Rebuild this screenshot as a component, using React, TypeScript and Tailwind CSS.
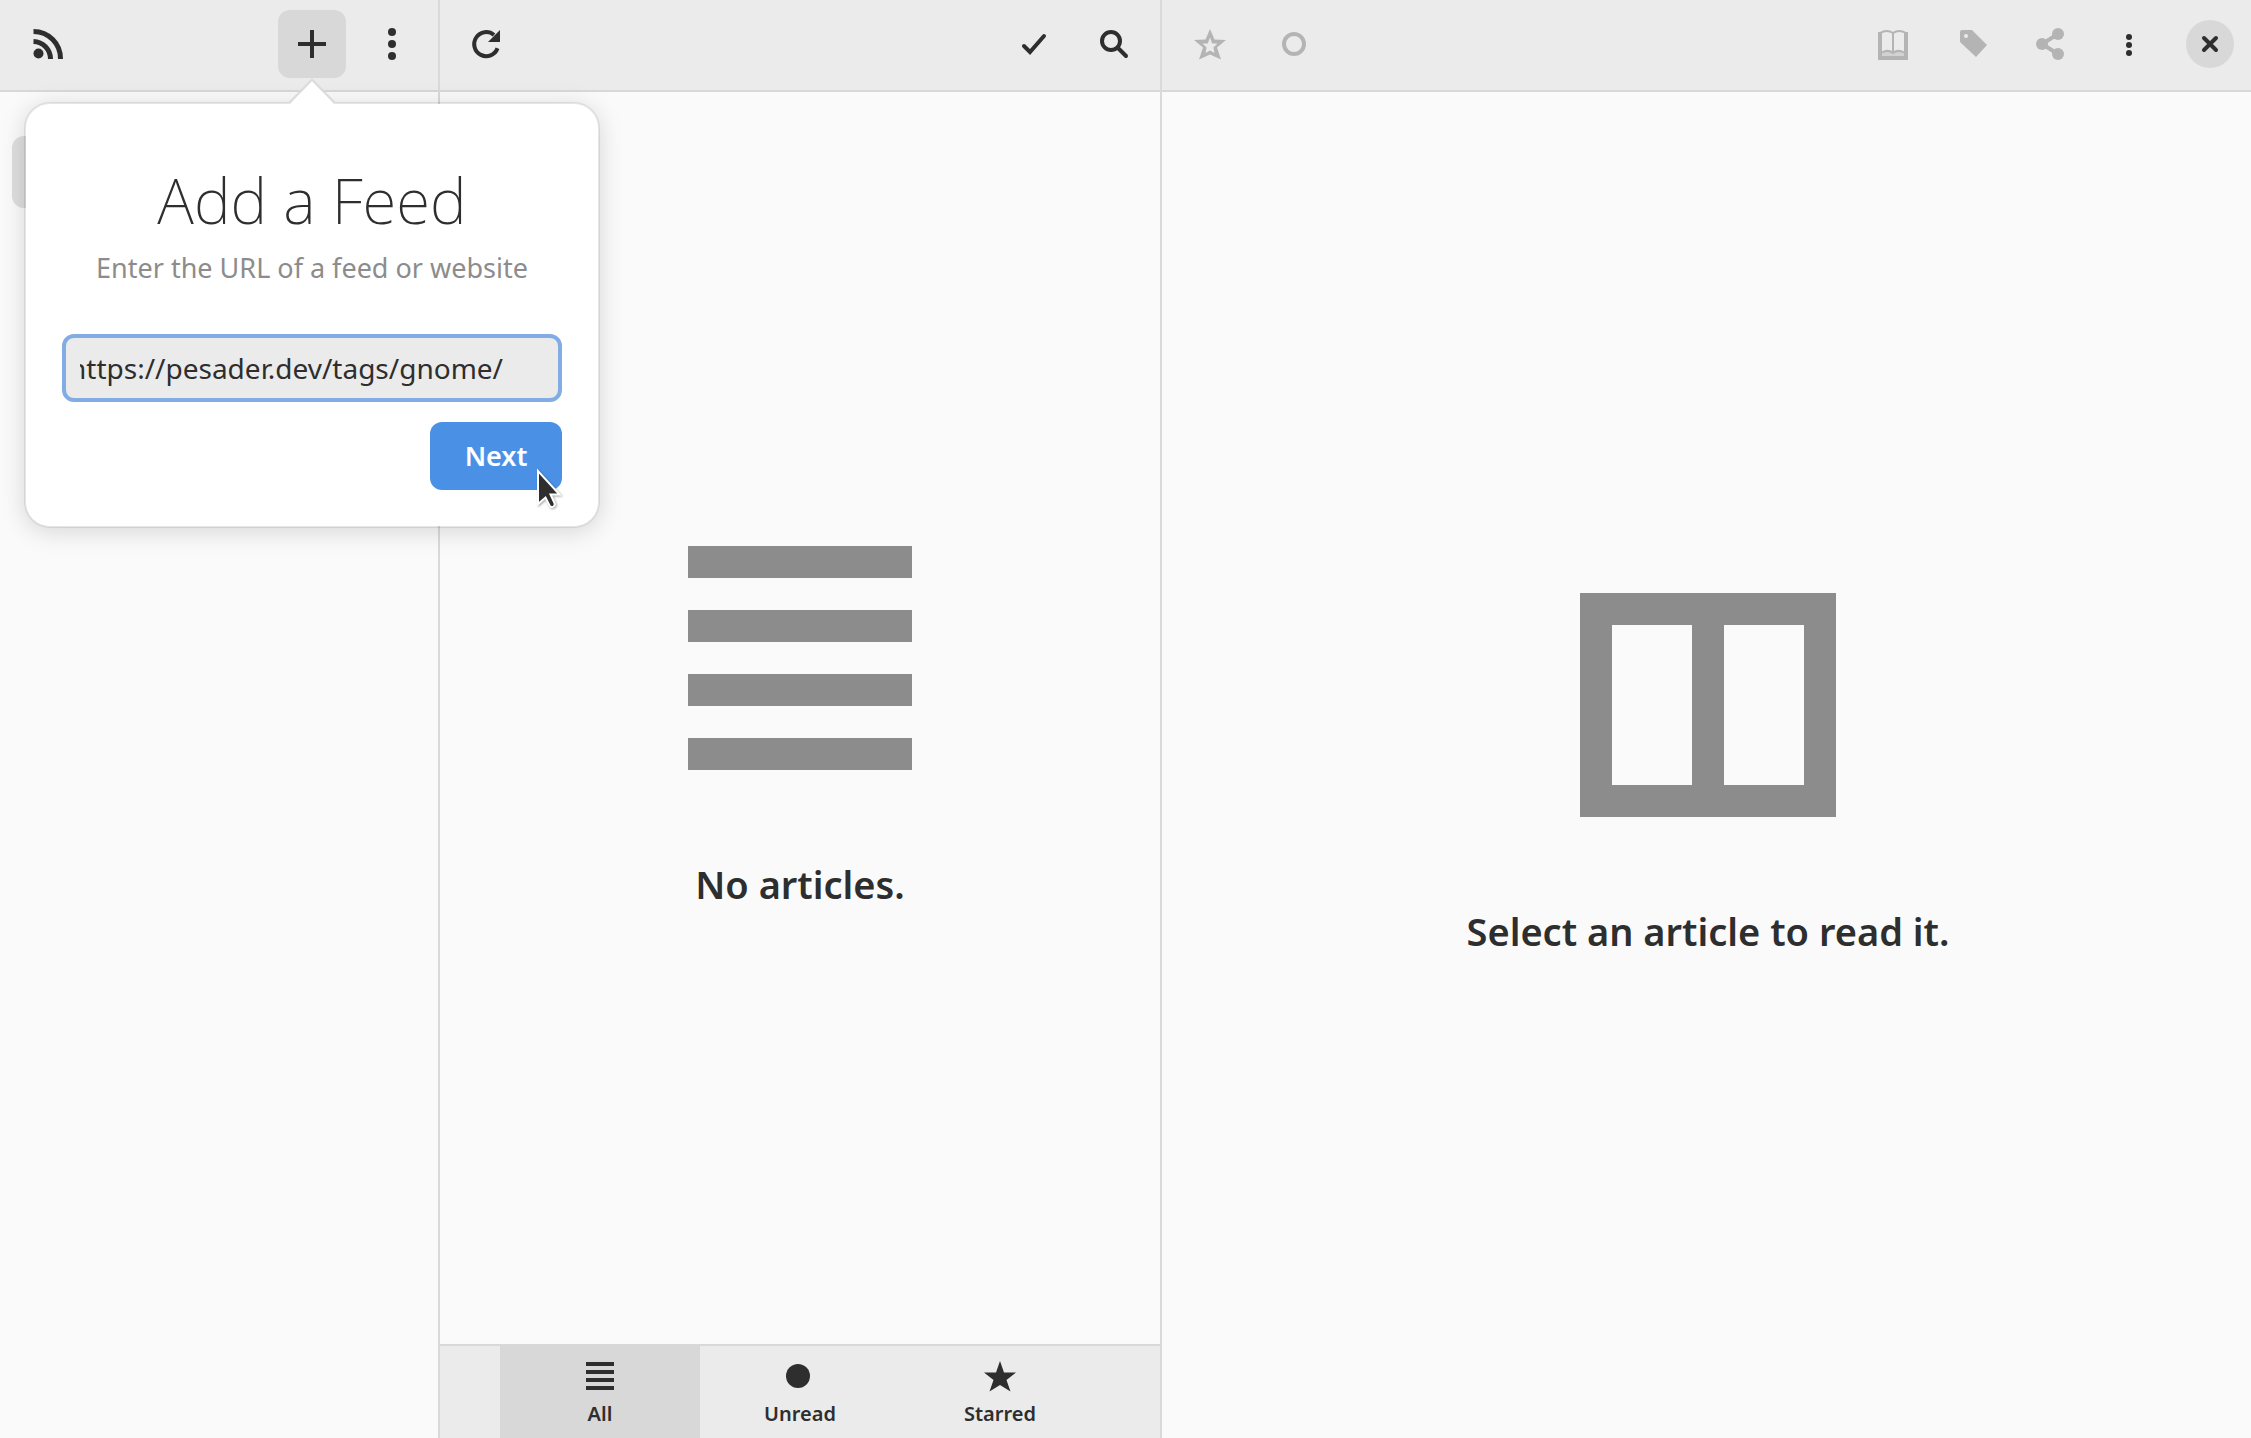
import { useState, type ReactNode } from "react";

function Icon({ children, className = "text-[#2e2e2e]" }: { children: ReactNode; className?: string }) {
  return (
    <svg viewBox="0 0 40 40" className={`size-10 shrink-0 ${className}`} fill="currentColor" aria-hidden="true">
      {children}
    </svg>
  );
}

function HeaderButton({
  label,
  active = false,
  disabled = false,
  children,
}: {
  label: string;
  active?: boolean;
  disabled?: boolean;
  children: ReactNode;
}) {
  return (
    <button
      type="button"
      aria-label={label}
      disabled={disabled}
      className={`flex size-[68px] shrink-0 items-center justify-center rounded-xl ${active ? "bg-[#d8d8d8]" : ""}`}
    >
      <Icon className={disabled ? "text-[#b4b4b4]" : "text-[#2e2e2e]"}>{children}</Icon>
    </button>
  );
}

function EmptyState({ text, children }: { text: string; children: ReactNode }) {
  return (
    <div className="flex flex-1 flex-col items-center justify-center pt-0.5">
      <svg viewBox="0 0 256 256" className="size-64" fill="#8c8c8c" aria-hidden="true">
        {children}
      </svg>
      <h2 className="mt-[74px] text-[38px] leading-[48px] font-semibold">{text}</h2>
    </div>
  );
}

function ViewTab({
  label,
  selected = false,
  children,
}: {
  label: string;
  selected?: boolean;
  children: ReactNode;
}) {
  return (
    <button
      type="button"
      aria-pressed={selected}
      className={`flex w-[200px] flex-col items-center gap-1 pt-2.5 ${selected ? "bg-[#d8d8d8]" : ""}`}
    >
      <Icon>{children}</Icon>
      <span className="text-[20px] leading-7 font-semibold">{label}</span>
    </button>
  );
}

function AddFeedPopover() {
  const [url, setUrl] = useState("https://pesader.dev/tags/gnome/");
  return (
    <div
      role="dialog"
      aria-labelledby="add-feed-title"
      className="absolute top-[102px] left-6 z-10 w-[576px] rounded-[26px] border-2 border-black/8 bg-white bg-clip-padding p-9 shadow-[0_4px_24px_rgba(0,0,0,0.14)]"
    >
      <svg viewBox="0 0 48 26" className="absolute -top-[26px] left-[262px] h-[26px] w-12" aria-hidden="true">
        <path d="M2 26 24 3 46 26Z" fill="#fff" />
        <path d="M1 25 24 1.5 47 25" fill="none" stroke="#dcdcdc" strokeWidth="2" />
      </svg>
      <h1 id="add-feed-title" className="mt-6 text-center text-[62px] leading-[72px] font-extralight">
        Add a Feed
      </h1>
      <label htmlFor="feed-url" className="mt-3.5 block text-center text-[27px] leading-9 text-[#8c8c8c]">
        Enter the URL of a feed or website
      </label>
      <input
        id="feed-url"
        type="text"
        value={url}
        onChange={(e) => setUrl(e.target.value)}
        className="mt-12 block h-[68px] w-full rounded-xl border-4 border-[#81ace4] bg-[#ebebeb] px-3.5 indent-[-11px] text-[28px] outline-none"
      />
      <div className="mt-5 flex justify-end">
        <button
          type="button"
          className="relative h-[68px] w-[132px] rounded-xl bg-[#4a91e6] text-[27px] font-semibold text-white"
        >
          Next
          <svg
            viewBox="0 0 30 44"
            className="absolute top-[45px] left-[106px] h-11 w-[30px] drop-shadow-[1px_1px_1px_rgba(0,0,0,0.35)]"
            aria-hidden="true"
          >
            <path
              d="M2 4V37L9.500 30.500L13.500 38.500Q15 41 17.500 39.500Q19.500 38 18.500 36L14.500 27.500H23.500Z"
              fill="#2e2e2e"
              stroke="#fff"
              strokeWidth="2"
            />
          </svg>
        </button>
      </div>
    </div>
  );
}

function Sidebar() {
  return (
    <aside className="relative flex w-[440px] shrink-0 flex-col border-r-2 border-[#dadada]">
      <header className="flex h-[92px] items-start justify-between border-b-2 border-[#d8d8d8] bg-[#ebebeb] px-3 py-2.5">
        <HeaderButton label="Feeds">
          <circle cx="12.500" cy="29.500" r="5" />
          <path
            d="M7.500 17.500A17.500 17.500 0 0 1 24.500 35M7.500 7.500A27 27 0 0 1 34.500 35"
            fill="none"
            stroke="currentColor"
            strokeWidth="5"
          />
        </HeaderButton>
        <div className="flex gap-3">
          <HeaderButton label="Add a feed" active>
            <path d="M18 6h4v12h12v4H22v12h-4V22H6v-4h12z" />
          </HeaderButton>
          <HeaderButton label="Main menu">
            <circle cx="20" cy="8" r="4" />
            <circle cx="20" cy="20" r="4" />
            <circle cx="20" cy="32" r="4" />
          </HeaderButton>
        </div>
      </header>
      <nav className="px-3 pt-11" aria-label="Feed list">
        <div className="h-[72px] rounded-xl bg-[#dedede]" />
      </nav>
      <AddFeedPopover />
    </aside>
  );
}

function ArticleList() {
  return (
    <section className="flex w-[722px] shrink-0 flex-col border-r-2 border-[#dadada]">
      <header className="flex h-[92px] items-start justify-between border-b-2 border-[#d8d8d8] bg-[#ebebeb] px-3 py-2.5">
        <HeaderButton label="Refresh">
          <path
            d="M31.500 24.200A12 12 0 1 1 28 11"
            fill="none"
            stroke="currentColor"
            strokeWidth="4"
          />
          <path d="M34 6V18H22Z" />
        </HeaderButton>
        <div className="flex gap-3">
          <HeaderButton label="Mark all as read">
            <path
              d="M10 22 16 28 30 12"
              fill="none"
              stroke="currentColor"
              strokeWidth="4"
              strokeLinecap="round"
            />
          </HeaderButton>
          <HeaderButton label="Search">
            <g fill="none" stroke="currentColor" strokeWidth="4" strokeLinecap="round">
              <circle cx="17" cy="17" r="9" />
              <path d="M24 24 32 32" />
            </g>
          </HeaderButton>
        </div>
      </header>
      <EmptyState text="No articles.">
        <path d="M16 16h224v32H16zM16 80h224v32H16zM16 144h224v32H16zM16 208h224v32H16z" />
      </EmptyState>
      <footer className="flex h-[94px] justify-center border-t-2 border-[#d8d8d8] bg-[#ebebeb]">
        <ViewTab label="All" selected>
          <path d="M6 6h28v4H6zM6 14h28v4H6zM6 22h28v4H6zM6 30h28v4H6z" />
        </ViewTab>
        <ViewTab label="Unread">
          <circle cx="18" cy="20" r="12" />
        </ViewTab>
        <ViewTab label="Starred">
          <path d="M20 5 24 16.500H36L26.500 24 30.500 35.500 20 29 9.500 35.500 13.500 24 4 16.500H16Z" />
        </ViewTab>
      </footer>
    </section>
  );
}

function ArticleView() {
  return (
    <main className="flex min-w-0 flex-1 flex-col">
      <header className="flex h-[92px] items-start justify-between border-b-2 border-[#d8d8d8] bg-[#ebebeb] px-3.5 py-2.5">
        <div className="flex gap-4">
          <HeaderButton label="Star" disabled>
            <path
              fillRule="evenodd"
              d="M20 5 24.500 15.500 36 16 27 23.500 31 35.500 20 30.500 9 35.500 13 23.500 4 16 15.500 15.500ZM20 13.500 17.800 19.500H12.500L16.600 23.500 15.500 29 20 26.500 24.500 29 23.400 23.500 27.500 19.500H22.200Z"
            />
          </HeaderButton>
          <HeaderButton label="Mark as read" disabled>
            <circle cx="20" cy="20" r="10" fill="none" stroke="currentColor" strokeWidth="4" />
          </HeaderButton>
        </div>
        <div className="flex gap-3">
          <HeaderButton label="Reader view" disabled>
            <path d="M8 31h30v5H8z" />
            <path d="M8 8h4v28H8zM34 8h4v28h-4zM22 9h2v20h-2z" />
            <path d="M12 28Q17 26 23 29.500 29 26 34 28V32H12Z" fill="#d2d2d2" />
            <path
              d="M10 9Q17 5 23 9 29 5 36 9M12 28.500Q18 25 23 29 28 25 34 28.500"
              fill="none"
              stroke="currentColor"
              strokeWidth="2"
            />
          </HeaderButton>
          <HeaderButton label="Tags" disabled>
            <path d="M12 6H22L37 21 26 33 10 18V8Q10 6 12 6Z" />
            <circle cx="16" cy="12" r="2" fill="#ebebeb" />
          </HeaderButton>
          <HeaderButton label="Share" disabled>
            <circle cx="12" cy="20" r="6" />
            <circle cx="28" cy="10" r="6" />
            <circle cx="28" cy="30" r="6" />
            <path d="M28 10 12 20 28 30" fill="none" stroke="currentColor" strokeWidth="4" />
          </HeaderButton>
          <HeaderButton label="Article menu">
            <circle cx="19" cy="13" r="3" />
            <circle cx="19" cy="21" r="3" />
            <circle cx="19" cy="29" r="3" />
          </HeaderButton>
          <button
            type="button"
            aria-label="Close"
            className="mt-2.5 mr-[3px] ml-2.5 flex size-12 shrink-0 items-center justify-center rounded-full bg-[#d8d8d8]"
          >
            <Icon>
              <path
                d="M14 14 26 26M26 14 14 26"
                fill="none"
                stroke="currentColor"
                strokeWidth="4"
                strokeLinecap="round"
              />
            </Icon>
          </button>
        </div>
      </header>
      <div className="flex flex-1 pl-[3px]">
        <EmptyState text="Select an article to read it.">
          <path fillRule="evenodd" d="M0 16h256v224H0zM32 48v160h80V48zM144 48v160h80V48z" />
        </EmptyState>
      </div>
    </main>
  );
}

export default function App() {
  return (
    <div className="flex min-h-screen bg-[#fafafa] font-['Noto_Sans',sans-serif] text-[#2e2e2e]">
      <Sidebar />
      <ArticleList />
      <ArticleView />
    </div>
  );
}
